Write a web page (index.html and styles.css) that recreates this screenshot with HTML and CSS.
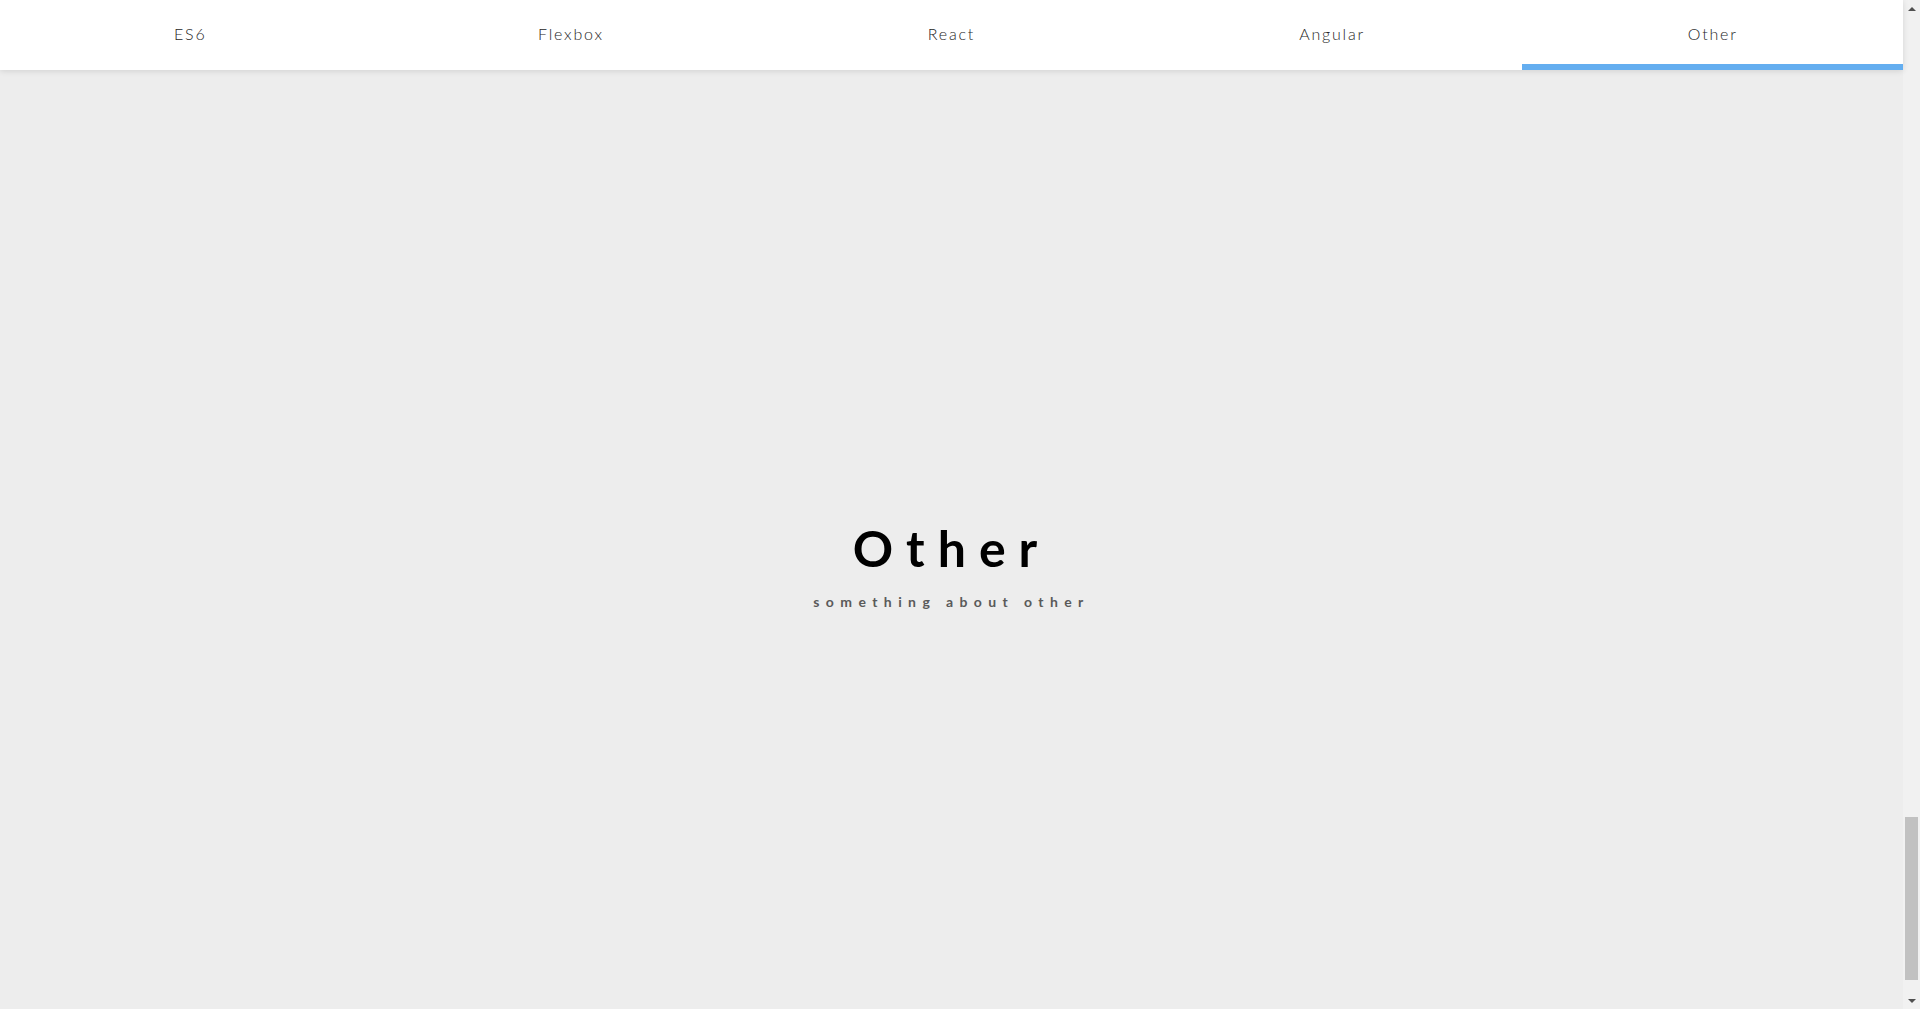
FILE: index.html
```html
<!DOCTYPE html>
<html lang="en">
<head>
<meta charset="utf-8">
<title>Other</title>
<link rel="stylesheet" href="styles.css">
</head>
<body>
<div class="page">
  <nav class="tabs">
    <a class="tab" href="#es6">ES6</a>
    <a class="tab" href="#flexbox">Flexbox</a>
    <a class="tab" href="#react">React</a>
    <a class="tab" href="#angular">Angular</a>
    <a class="tab tab-active" href="#other">Other</a>
  </nav>
  <section class="panel" id="other">
    <h1 class="panel-title">Other</h1>
    <p class="panel-sub">something about other</p>
  </section>
</div>
<aside class="scrollbar" aria-hidden="true">
  <div class="sb-btn"><span class="sb-arrow-up"></span></div>
  <div class="sb-track"><div class="sb-thumb"></div></div>
  <div class="sb-btn"><span class="sb-arrow-down"></span></div>
</aside>
</body>
</html>
```

FILE: styles.css
```css
html, body {
  margin: 0;
  padding: 0;
  height: 100%;
  overflow: hidden;
}
body {
  display: flex;
  background: #ededed;
  font-family: "Lato", "Noto Sans", sans-serif;
}
.page {
  flex: 1 1 auto;
  display: flex;
  flex-direction: column;
  height: 100vh;
  min-width: 0;
}
.tabs {
  position: relative;
  z-index: 2;
  display: flex;
  background: #ffffff;
  box-shadow: 0 1px 6px rgba(0, 0, 0, 0.12);
}
.tab {
  flex: 1 1 0;
  text-align: center;
  text-decoration: none;
  color: #262626;
  font-size: 16px;
  font-weight: 300;
  line-height: 20px;
  letter-spacing: 1.8px;
  padding: 24px 0 20px;
  border-bottom: 6px solid transparent;
}
.tab-active {
  border-bottom-color: #64aef0;
}
.panel {
  flex: 1 1 auto;
  box-sizing: border-box;
  padding-top: 49px;
  display: flex;
  flex-direction: column;
  align-items: center;
  justify-content: center;
}
.panel-title {
  margin: 0;
  font-size: 50px;
  line-height: 60px;
  font-weight: 700;
  letter-spacing: 13px;
  color: #000;
}
.panel-sub {
  margin: 15px 0 0;
  font-size: 14px;
  line-height: 17px;
  font-weight: 700;
  letter-spacing: 6.4px;
  color: #5a5a5a;
}
.scrollbar {
  flex: 0 0 17px;
  width: 17px;
  height: 100vh;
  display: flex;
  flex-direction: column;
  background: #f1f1f1;
}
.sb-btn {
  height: 17px;
  display: flex;
  align-items: center;
  justify-content: center;
}
.sb-arrow-up {
  width: 0;
  height: 0;
  border-left: 4px solid transparent;
  border-right: 4px solid transparent;
  border-bottom: 4px solid #505050;
}
.sb-arrow-down {
  width: 0;
  height: 0;
  border-left: 4px solid transparent;
  border-right: 4px solid transparent;
  border-top: 4px solid #505050;
}
.sb-track {
  flex: 1 1 auto;
  display: flex;
  flex-direction: column;
  justify-content: flex-end;
  padding: 0 2px 12px;
}
.sb-thumb {
  height: 163px;
  background: #c1c1c1;
}
```
